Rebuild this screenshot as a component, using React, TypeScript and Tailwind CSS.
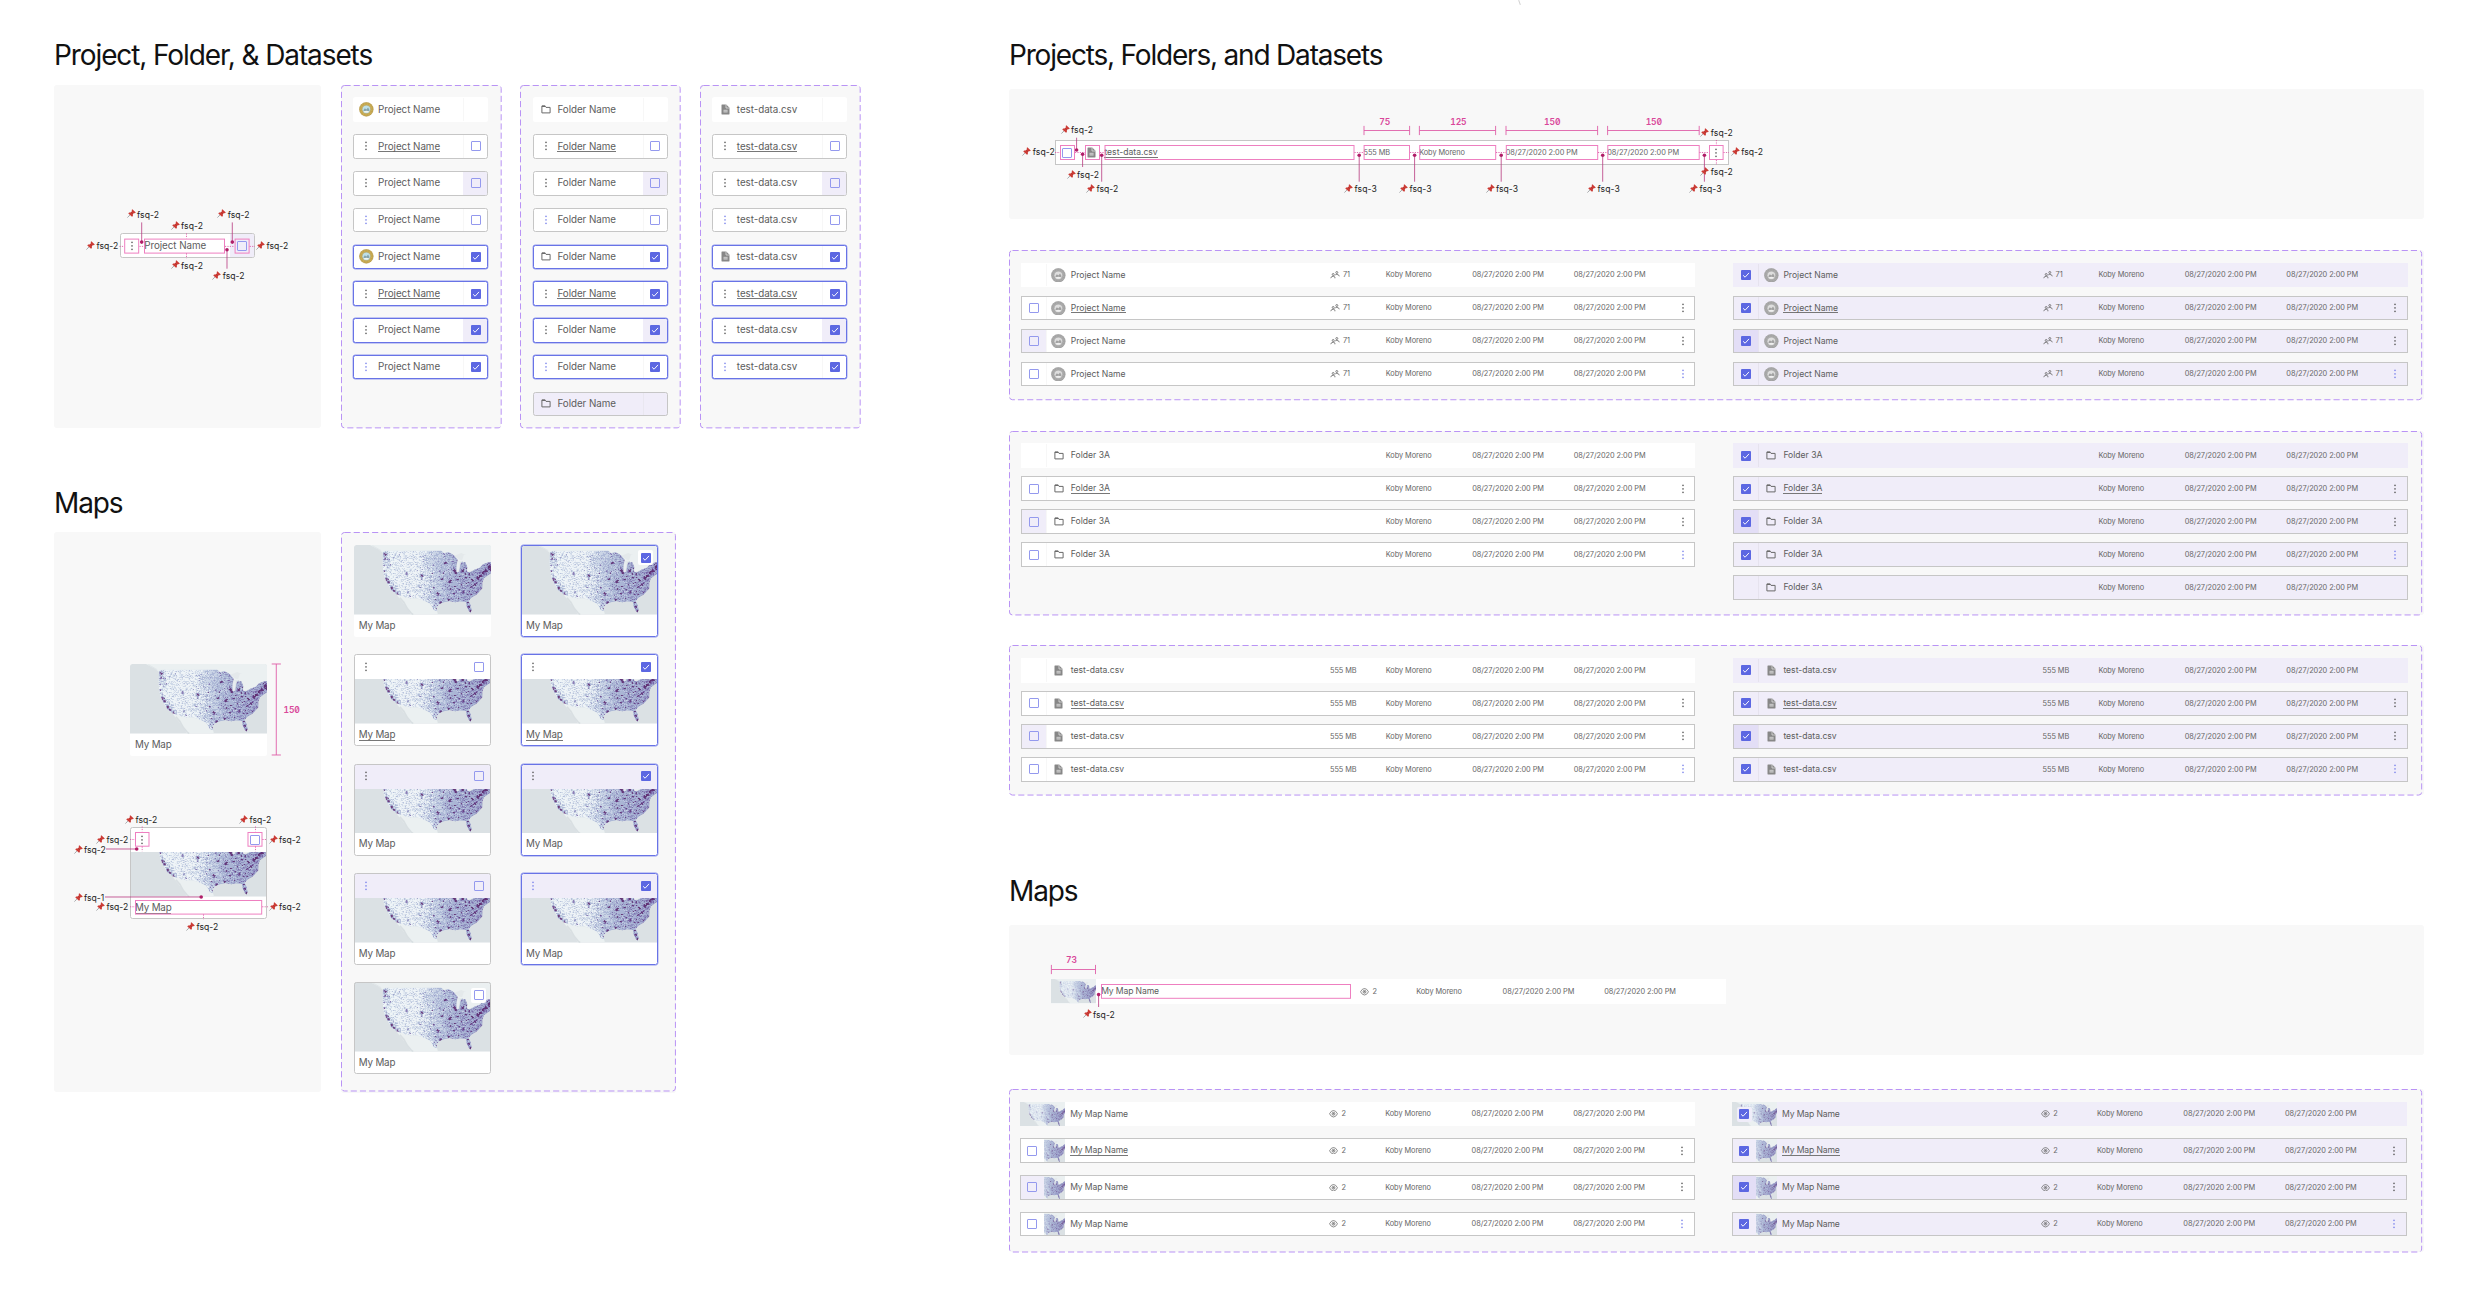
import React from "react";

/* ---------- population map ---------- */

const US =
  "M87 18L100 17L262 17L270 25L285 22L300 31L311 44L308 60L308 78L316 82L319 60L324 50L334 52L340 66L339 80L350 82L362 74L378 68L388 58L400 53L413 51L413 84L400 92L390 100L385 113L385 130L370 147L352 158L344 168L350 180L353 195L350 203L344 196L338 182L336 170L318 169L304 172L288 168L270 172L256 178L248 187L250 199L240 195L232 180L222 172L208 166L190 160L165 160L150 155L128 148L112 136L102 118L92 98L88 78L86 50Z";

function seeded(seed: number) {
  let s = seed;
  return () => {
    s = (s * 1664525 + 1013904223) % 4294967296;
    return s / 4294967296;
  };
}

/* Population centres: x, y, radius. */
const CITIES: [number, number, number][] = [
  [94, 28, 7], [94, 42, 4], [92, 78, 5], [97, 104, 8], [104, 112, 6], [113, 130, 8], [121, 138, 6], [130, 148, 7],
  [100, 66, 3], [110, 60, 3], [158, 86, 6], [160, 92, 4], [204, 92, 7], [203, 102, 4], [162, 142, 5], [168, 154, 4],
  [200, 128, 4], [136, 30, 3], [120, 38, 3], [150, 52, 3], [274, 54, 6], [264, 102, 6], [302, 78, 7], [306, 84, 5],
  [288, 110, 6], [252, 148, 7], [260, 172, 7], [246, 164, 4], [284, 165, 4], [292, 106, 3], [326, 78, 6], [334, 86, 4],
  [346, 88, 4], [336, 98, 3], [318, 94, 3], [310, 104, 3], [328, 142, 7], [322, 118, 4], [316, 134, 4], [352, 126, 4],
  [364, 118, 4], [372, 100, 6], [380, 92, 6], [388, 84, 6], [396, 78, 6], [406, 66, 7], [410, 74, 5], [352, 148, 3],
  [342, 172, 3], [344, 186, 5], [350, 198, 6], [258, 78, 3], [268, 84, 3], [240, 128, 4], [230, 140, 3], [290, 132, 4],
  [300, 146, 3], [304, 124, 3], [238, 60, 3], [236, 84, 3], [356, 106, 4], [344, 112, 3], [248, 190, 3],
];

const SHADES = ["#f1f6f8", "#cbd5e6", "#a9b4d4", "#8c8bbd", "#7158a0", "#561f66"];

function buildCells(): string[] {
  const rnd = seeded(42);
  const out = SHADES.map(() => "");
  for (let y = 15; y < 207; y += 3) {
    for (let x = 84; x < 413; x += 3) {
      const east = Math.min(1, Math.max(0, (x - 180) / 110));
      let v = 0.04 + east * 0.34 + Math.max(0, (x - 300) / 113) * 0.14;
      v += (rnd() - 0.5) * 0.36;
      if (rnd() < 0.11) v += 0.24;
      if (x < 106 && y < 62) v += 0.22;
      if (x < 140 && Math.abs(y - (x * 1.25 - 22)) < 14 && y > 84) v += 0.2;
      for (const [cx, cy, r] of CITIES) {
        const d = Math.hypot(x + 1.5 - cx, y + 1.5 - cy);
        if (d < r) v += 0.95 * (1 - d / r) * (0.6 + rnd() * 0.7);
      }
      const i = v < 0.08 ? 0 : v < 0.28 ? 1 : v < 0.48 ? 2 : v < 0.62 ? 3 : v < 0.78 ? 4 : 5;
      if (i === 1 && rnd() < 0.4) continue;
      out[i] += `M${x} ${y}h3v3h-3z`;
    }
  }
  return out;
}

const CELLS = buildCells();

function MapDefs() {
  return (
    <svg className="absolute h-0 w-0" aria-hidden>
      <defs>
        <linearGradient id="usFill" x1="0" x2="1" y1="0" y2="0">
          <stop offset="0" stopColor="#e6eef3" />
          <stop offset="0.32" stopColor="#e2eaf2" />
          <stop offset="0.6" stopColor="#b9c5de" />
          <stop offset="0.8" stopColor="#a6afd3" />
          <stop offset="1" stopColor="#9793c3" />
        </linearGradient>
        <clipPath id="usClip">
          <path d={US} />
        </clipPath>
        <symbol id="usMap" viewBox="0 0 413 209" preserveAspectRatio="xMidYMid slice">
          <rect width="413" height="209" fill="#dbe1e4" />
          <path d="M48 0L75 14L88 24L413 60V0Z" fill="#ebf0f1" />
          <path d="M56 2L82 17" stroke="#dbe1e4" strokeWidth="2" />
          <path d="M300 33L322 24L345 34L340 48L318 44Z" fill="#e4e9eb" />
          <path d="M340 82L362 74L378 68L388 58L413 49V30L330 30L324 48L334 52L341 66Z" fill="#ebf0f1" />
          <path d="M126 146L165 158L210 164L236 182L250 199L252 209H172L160 190L146 172Z" fill="#ebf0f1" />
          <path d="M138 158L150 172L160 190L172 204L178 209" stroke="#d9dfe2" strokeWidth="5" fill="none" />
          <path d={US} fill="url(#usFill)" />
          <g clipPath="url(#usClip)" opacity="0.85">
            {CELLS.map((d, i) => (
              <path key={i} d={d} fill={SHADES[i]} />
            ))}
          </g>
          <path d="M308 80L309 58L314 48L318 52L316 70L313 82Z" fill="#e8edf0" />
        </symbol>
      </defs>
    </svg>
  );
}

function MapImage({ className }: { className: string }) {
  return (
    <svg className={className}>
      <use href="#usMap" width="100%" height="100%" />
    </svg>
  );
}

/* ---------- small icons ---------- */

function Check({ checked }: { checked?: boolean }) {
  if (!checked) return <span className="block size-[10px] rounded-[1px] border border-[#9499ee]" />;
  return (
    <span className="flex size-[10px] items-center justify-center rounded-[1px] bg-[#5c67e2]">
      <svg viewBox="0 0 10 10" className="size-[10px]" fill="none" stroke="#fff" strokeWidth="0.95">
        <path d="M2.1 5.3L4.1 7.2L8 2.9" />
      </svg>
    </span>
  );
}

function Dots({ active }: { active?: boolean }) {
  return (
    <svg viewBox="0 0 4 10" className="h-[10px] w-[4px]" fill={active ? "#6f79ea" : "#4a4a4a"}>
      <rect x="1.35" y="0.7" width="1.3" height="1.4" />
      <rect x="1.35" y="4.2" width="1.3" height="1.4" />
      <rect x="1.35" y="7.7" width="1.3" height="1.4" />
    </svg>
  );
}

function FolderIcon() {
  return (
    <svg viewBox="0 0 10 9" className="h-[9px] w-[10px]" fill="none" stroke="#6a6a6a" strokeWidth="1">
      <path d="M0.9 7.9V1.1H4.1L5 2.4H9.1V7.9Z" />
      <path d="M0.9 1.3H4.2" strokeWidth="1.4" />
    </svg>
  );
}

function FileIcon() {
  return (
    <svg viewBox="0 0 9 11" className="h-[11px] w-[9px]">
      <path d="M0.5 0.9Q0.5 0.5 0.9 0.5H5.2L8.5 3.8V10.1Q8.5 10.5 8.1 10.5H0.9Q0.5 10.5 0.5 10.1Z" fill="#878787" />
      <path d="M5 0.5V4H8.5" stroke="#e8e8e8" strokeWidth="0.7" fill="none" />
      <path d="M2.5 5.8H6.6V8.6H2.5Z" fill="#c9c9c9" />
      <path d="M2.5 7.2H6.6" stroke="#999" strokeWidth="0.4" />
    </svg>
  );
}

function Seal({ gray }: { gray?: boolean }) {
  const ring = gray ? "#adadad" : "#cdb057";
  const edge = gray ? "#8c8c8c" : "#9d813c";
  const sky = gray ? "#dedede" : "#bfe0e6";
  const land = gray ? "#808080" : "#67848c";
  return (
    <svg viewBox="0 0 30 30" className="size-[14.7px]">
      <circle cx="15" cy="15" r="14.4" fill={ring} />
      <circle cx="15" cy="15" r="14" fill="none" stroke={edge} strokeWidth="1" opacity="0.7" />
      <circle cx="15" cy="15" r="11.4" fill="none" stroke={edge} strokeWidth="1.8" strokeDasharray="1.6 1.9" opacity="0.5" />
      <circle cx="15" cy="15" r="8.6" fill={sky} stroke={edge} strokeWidth="0.7" />
      <path d="M9 17L12 13L15 15.5L18.5 11L21.5 16.5L20.5 19H10Z" fill={land} opacity="0.65" />
      <path d="M9.5 19Q15 16.5 20.5 19L18.5 21.6H11.5Z" fill={gray ? "#efefef" : "#f1f5ee"} />
    </svg>
  );
}

function PeopleIcon() {
  return (
    <svg viewBox="0 0 20 16" className="h-[8px] w-[10px]" fill="none" stroke="#5f5f5f" strokeWidth="1.5">
      <circle cx="6.4" cy="7" r="2" />
      <path d="M1.5 14.4Q2 10.6 6.4 10.6Q8.6 10.6 9.8 12V14.6" />
      <circle cx="13.6" cy="3" r="2" />
      <path d="M9.5 9Q10.5 6.8 13.6 6.8Q18 6.8 18.6 10.6" />
    </svg>
  );
}

function EyeIcon() {
  return (
    <svg viewBox="0 0 18 15" className="h-[7.5px] w-[9px]" fill="none" stroke="#5f5f5f" strokeWidth="1.4">
      <path d="M1 7.5Q4.4 1 9 1T17 7.5Q13.6 14 9 14T1 7.5Z" />
      <circle cx="9" cy="7.5" r="2.9" />
      <circle cx="9" cy="7.5" r="0.8" fill="#5f5f5f" />
    </svg>
  );
}

function PinIcon() {
  return (
    <svg viewBox="0 0 18 18" className="h-[9px] w-[9px]">
      <path d="M0.8 17.2L7.4 10.4" stroke="#8c9094" strokeWidth="1.5" />
      <path d="M10.6 0.4L17.6 6.8L15.6 8.4L13.8 8.2L11.6 11L11.9 14L10 15.6L2.6 8.8L4.2 7L7 7.2L9.9 4.6L9.4 2.2Z" fill="#cc3b35" />
      <path d="M9 7.4L11.6 9.8" stroke="#96302c" strokeWidth="1.3" />
    </svg>
  );
}

/* ---------- annotations ---------- */

type Pt = [number, number];

function Pins({ origin, items }: { origin: Pt; items: [number, number, string?][] }) {
  return (
    <>
      {items.map(([x, y, label], i) => (
        <span
          key={i}
          className="absolute flex h-3 -translate-y-1/2 items-center whitespace-nowrap text-[8.58px] leading-none tracking-[0.05px] text-[#222]"
          style={{ left: x - origin[0], top: y - origin[1] + 0.4 }}
        >
          <span className="w-[10.4px] -translate-y-[1px]">
            <PinIcon />
          </span>
          {label ?? "fsq-2"}
        </span>
      ))}
    </>
  );
}

function Measures({ origin, items }: { origin: Pt; items: [number, number, string][] }) {
  return (
    <>
      {items.map(([x, y, label], i) => (
        <span
          key={i}
          className="absolute -translate-x-1/2 -translate-y-1/2 text-[8.6px] leading-none font-semibold tracking-[-0.15px] text-[#d9479a] [font-feature-settings:'zero','tnum']"
          style={{ left: x - origin[0], top: y - origin[1] + 0.3 }}
        >
          {label}
        </span>
      ))}
    </>
  );
}

/* Boxes are [x, y, width, height]; leaders are [x1, y1, x2, y2] with the dot at the second point. */
function Marks({
  view,
  boxes = [],
  dotted = [],
  leaders = [],
  rulers = [],
}: {
  view: string;
  boxes?: number[][];
  dotted?: number[][];
  leaders?: number[][];
  rulers?: number[][];
}) {
  return (
    <svg viewBox={view} preserveAspectRatio="xMinYMin meet" className="absolute inset-0 h-full w-full">
      {boxes.map(([x, y, w, h], i) => (
        <rect key={`b${i}`} x={x + 0.5} y={y + 0.5} width={w - 1} height={h - 1} fill="none" stroke="#ee7fc0" strokeWidth="1" />
      ))}
      {dotted.map(([x1, y1, x2, y2], i) => (
        <line key={`d${i}`} x1={x1} y1={y1} x2={x2} y2={y2} stroke="#d94b9f" strokeWidth="0.8" strokeDasharray="1.2 1.2" />
      ))}
      {leaders.map(([x1, y1, x2, y2], i) => (
        <g key={`l${i}`}>
          <line x1={x1} y1={y1} x2={x2} y2={y2} stroke="#b8387f" strokeWidth="0.8" />
          <circle cx={x2} cy={y2} r="1.8" fill="#b01e68" />
        </g>
      ))}
      {rulers.map(([x1, y1, x2, y2], i) => {
        const horizontal = y1 === y2;
        const t = 4.6;
        return (
          <g key={`r${i}`} stroke="#df5fa8" strokeWidth="0.9">
            <line x1={x1} y1={y1} x2={x2} y2={y2} />
            <line x1={horizontal ? x1 : x1 - t} x2={horizontal ? x1 : x1 + t} y1={horizontal ? y1 - t : y1} y2={horizontal ? y1 + t : y1} />
            <line x1={horizontal ? x2 : x2 - t} x2={horizontal ? x2 : x2 + t} y1={horizontal ? y2 - t : y2} y2={horizontal ? y2 + t : y2} />
          </g>
        );
      })}
    </svg>
  );
}

/* ---------- panels ---------- */

function Heading({ children, className }: { children: React.ReactNode; className: string }) {
  return <h2 className={`flex items-center text-[28px] leading-none whitespace-nowrap text-[#111] ${className}`}>{children}</h2>;
}

function DashedPanel({ className, children }: { className: string; children: React.ReactNode }) {
  return (
    <div className={`relative rounded-[3px] bg-[#f8f8f8] ${className}`}>
      <svg className="pointer-events-none absolute inset-0 h-full w-full overflow-visible">
        <rect x="0.5" y="0.5" width="99.8%" height="99.7%" rx="3" fill="none" stroke="#b993f5" strokeWidth="1" strokeDasharray="6.13 3.07" />
      </svg>
      {children}
    </div>
  );
}

/* ---------- grid cards ---------- */

type CardState = {
  lead: "icon" | "dots" | "active";
  box?: "empty" | "checked";
  link?: boolean;
  hot?: boolean;
  selected?: boolean;
  plain?: boolean;
  target?: boolean;
};

const CARD_STATES: CardState[] = [
  { lead: "icon", plain: true },
  { lead: "dots", box: "empty", link: true },
  { lead: "dots", box: "empty", hot: true },
  { lead: "active", box: "empty" },
  { lead: "icon", box: "checked", selected: true },
  { lead: "dots", box: "checked", link: true, selected: true },
  { lead: "dots", box: "checked", hot: true, selected: true },
  { lead: "active", box: "checked", selected: true },
];

function Card({ s, icon, name }: { s: CardState; icon: React.ReactNode; name: string }) {
  const border = s.plain
    ? "border-transparent"
    : s.selected
      ? "border-[#6873e6] shadow-[0_0_0_0.4px_#8f97ee]"
      : "border-[#c6c6c6]";
  return (
    <div className={`flex h-[24.6px] w-[135px] items-stretch overflow-hidden rounded-[2.5px] border ${border} ${s.target ? "bg-[#f0edf9]" : "bg-white"}`}>
      <span className="flex w-[23.7px] items-center justify-center">{s.lead === "icon" ? icon : <Dots active={s.lead === "active"} />}</span>
      <span className="flex flex-1 items-center text-[9.8px] leading-none tracking-[-0.04px] whitespace-nowrap text-[#5c5c5c]">
        <span className={s.link ? "border-b border-[#777] pt-[1px]" : ""}>{name}</span>
      </span>
      <span className={`flex w-[24px] items-center justify-center border-l ${s.hot ? "border-[#f0edf9] bg-[#f0edf9]" : s.target ? "border-[#e9e7f0]" : "border-[#f7f7f7]"}`}>
        {s.box && <Check checked={s.box === "checked"} />}
      </span>
    </div>
  );
}

function CardColumn({ icon, name, extra }: { icon: React.ReactNode; name: string; extra?: boolean }) {
  return (
    <DashedPanel className="flex h-[343.4px] w-[160px] flex-col gap-[12.2px] pt-[12.8px] pl-[12.4px]">
      {CARD_STATES.map((s, i) => (
        <Card key={i} s={s} icon={icon} name={name} />
      ))}
      {extra && <Card s={{ lead: "icon", target: true }} icon={icon} name={name} />}
    </DashedPanel>
  );
}

/* ---------- map cards ---------- */

type MapState = {
  border: "none" | "gray" | "blue";
  header?: "white" | "tint";
  active?: boolean;
  link?: boolean;
  box?: "empty" | "checked";
};

const MAP_ROWS: MapState[][] = [
  [{ border: "none" }, { border: "blue", box: "checked" }],
  [{ border: "gray", header: "white", link: true, box: "empty" }, { border: "blue", header: "white", link: true, box: "checked" }],
  [{ border: "gray", header: "tint", box: "empty" }, { border: "blue", header: "tint", box: "checked" }],
  [{ border: "gray", header: "tint", active: true, box: "empty" }, { border: "blue", header: "tint", active: true, box: "checked" }],
  [{ border: "gray", box: "empty" }],
];

function MapCard({ s }: { s: MapState }) {
  const ring =
    s.border === "none"
      ? ""
      : s.border === "blue"
        ? "border border-[#6873e6] shadow-[0_0_0_0.4px_#8f97ee]"
        : "border border-[#c6c6c6]";
  return (
    <div className="relative h-[91.9px] w-[137.4px] rounded-[2.5px] bg-white">
      <MapImage className="block h-[69.7px] w-full rounded-t-[2.5px]" />
      <div className="flex h-[22px] items-center pl-[5.2px] text-[9.8px] leading-none tracking-[-0.17px] text-[#5c5c5c]">
        <span className={s.link ? "border-b border-[#777] pt-[1px]" : ""}>My Map</span>
      </div>
      {s.header ? (
        <div className={`absolute inset-x-0 top-0 flex h-[25px] items-center justify-between rounded-t-[2.5px] pr-[7.4px] pl-[10.3px] ${s.header === "tint" ? "bg-[#f0edf9]" : "bg-white"}`}>
          <Dots active={s.active} />
          <Check checked={s.box === "checked"} />
        </div>
      ) : (
        s.box && (
          <div className="absolute top-[5.2px] right-[4.8px] flex size-[15px] items-center justify-center rounded-[2px] bg-white">
            <Check checked={s.box === "checked"} />
          </div>
        )
      )}
      <div className={`absolute inset-0 rounded-[2.5px] ${ring}`} />
    </div>
  );
}

/* ---------- list rows ---------- */

type RowState = {
  plain?: boolean;
  link?: boolean;
  hot?: boolean;
  active?: boolean;
  box?: "empty" | "checked";
  dots?: boolean;
  selected?: boolean;
};

const LEFT_ROWS: RowState[] = [
  { plain: true },
  { box: "empty", link: true, dots: true },
  { box: "empty", hot: true, dots: true },
  { box: "empty", dots: true, active: true },
];

const RIGHT_ROWS: RowState[] = [
  { plain: true, box: "checked", selected: true },
  { box: "checked", link: true, dots: true, selected: true },
  { box: "checked", hot: true, dots: true, selected: true },
  { box: "checked", dots: true, active: true, selected: true },
];

type Kind = "project" | "folder" | "file" | "map";

const NAMES: Record<Kind, string> = { project: "Project Name", folder: "Folder 3A", file: "test-data.csv", map: "My Map Name" };

function Lead({ kind, s }: { kind: Kind; s: RowState }) {
  const tone = s.hot ? (s.selected ? "bg-[#e3def6]" : "bg-[#f0edf9]") : s.selected ? "bg-[#f0edf9]" : "bg-white";
  if (kind === "map") {
    return (
      <span className="relative -my-px -ml-px flex w-[45px] shrink-0 items-stretch">
        <MapImage className="block h-full w-full" />
        {s.plain ? (
          s.box && (
            <span className="absolute top-[5px] left-[5px] flex size-[15px] items-center justify-center rounded-[2px] bg-[#f0edf9]">
              <Check checked />
            </span>
          )
        ) : (
          <span className={`absolute inset-y-0 left-0 flex w-[24.3px] items-center justify-center ${tone}`}>
            <Check checked={s.box === "checked"} />
          </span>
        )}
      </span>
    );
  }
  const edge = s.selected ? "border-[#e6e3ee]" : "border-[#f7f7f7]";
  return (
    <span className="flex w-[49px] shrink-0">
      <span className={`flex w-[25px] shrink-0 items-center justify-center border-r ${edge} ${tone}`}>
        {s.box && <Check checked={s.box === "checked"} />}
      </span>
      <span className="flex w-[24px] shrink-0 items-center justify-center">
        {kind === "project" ? <Seal gray /> : kind === "folder" ? <FolderIcon /> : <FileIcon />}
      </span>
    </span>
  );
}

function Row({ kind, s }: { kind: Kind; s: RowState }) {
  const overlay = s.plain ? "" : "border border-[#c6c6c6]";
  return (
    <div className={`relative flex h-[24.6px] w-[674.6px] items-stretch ${s.selected ? "bg-[#f0edf9]" : "bg-white"}`}>
      <div className="flex w-[50px] shrink-0 py-px pl-px">
        <Lead kind={kind} s={s} />
      </div>
      <span className="flex w-[259.2px] items-center text-[8.58px] leading-none whitespace-nowrap text-[#5c5c5c]">
        <span className={`${s.link ? "border-b border-[#777] pt-[1px]" : ""} ${kind === "map" ? "tracking-[-0.12px]" : ""}`}>{NAMES[kind]}</span>
      </span>
      <div className="flex items-center text-[7.36px] leading-none tracking-[-0.06px] whitespace-nowrap text-[#666]">
        <span className="flex w-[55.8px] items-center">
          {kind === "project" && (
            <>
              <PeopleIcon />
              <span className="ml-[3px]">71</span>
            </>
          )}
          {kind === "file" && "555 MB"}
          {kind === "map" && (
            <>
              <EyeIcon />
              <span className="ml-[3.2px]">2</span>
            </>
          )}
        </span>
        <span className="w-[86.4px]">Koby Moreno</span>
        <span className="w-[101.6px]">08/27/2020 2:00 PM</span>
        <span className="w-[107px]">08/27/2020 2:00 PM</span>
      </div>
      {s.dots && (
        <span className="flex items-center">
          <Dots active={s.active} />
        </span>
      )}
      <div className={`absolute inset-0 ${overlay}`} />
    </div>
  );
}

function RowGroup({ kind, className, stack }: { kind: Kind; className: string; stack: string }) {
  return (
    <DashedPanel className={`flex w-[1415px] ${className}`}>
      <div className={`flex flex-col ${stack}`}>
        {LEFT_ROWS.map((s, i) => (
          <Row key={i} kind={kind} s={s} />
        ))}
      </div>
      <div className={`flex flex-col ${kind === "map" ? "ml-[37.2px]" : "ml-[38px]"} ${stack}`}>
        {RIGHT_ROWS.map((s, i) => (
          <Row key={i} kind={kind} s={s} />
        ))}
        {kind === "folder" && <Row kind="folder" s={{ selected: true }} />}
      </div>
    </DashedPanel>
  );
}

/* Dataset row used in the spacing specification, where columns are inset by the outer padding. */
function SpecRow() {
  return (
    <div className="relative flex h-[24.4px] w-[673.5px] items-center border border-[#c6c6c6] bg-white text-[7.36px] leading-none tracking-[-0.06px] whitespace-nowrap text-[#666]">
      <span className="ml-[6.2px]">
        <Check />
      </span>
      <span className="ml-[15px] w-[17px]">
        <FileIcon />
      </span>
      <span className="w-[259.1px] text-[8.58px] tracking-normal text-[#5c5c5c]">
        <span className="border-b border-[#777] pt-[1px]">test-data.csv</span>
      </span>
      <span className="w-[55.7px]">555 MB</span>
      <span className="w-[86.6px]">Koby Moreno</span>
      <span className="w-[101.5px]">08/27/2020 2:00 PM</span>
      <span className="w-[107.1px]">08/27/2020 2:00 PM</span>
      <Dots />
    </div>
  );
}

/* ---------- page ---------- */

export default function App() {
  return (
    <div className="relative flex h-[1294px] w-[2470px] overflow-hidden bg-white pl-[54px] font-['Inter',sans-serif]">
      <MapDefs />
      <span className="absolute top-0 left-[1519px] h-[5px] w-px rotate-[-20deg] bg-[#d0d0d0]" />

      <div className="flex w-[955px] flex-col pt-[25px]">
        <Heading className="h-[59.6px] tracking-[-1.1px]">Project, Folder, &amp; Datasets</Heading>
        <div className="flex">
          <div className="relative mr-[20px] flex h-[343.4px] w-[267px] items-start rounded-[3px] bg-[#f8f8f8] pt-[148.7px] pl-[65.5px]">
            <Card s={{ lead: "dots", box: "empty", hot: true }} icon={null} name="Project Name" />
            <Marks
              view="54 84.6 267 343.4"
              boxes={[[124.2, 238.2, 15, 15], [144, 238.2, 81, 15], [234.6, 238.2, 15, 15]]}
              dotted={[
                [119.5, 246, 124, 246], [139.5, 246, 144, 246], [225, 246, 234.6, 246], [249.7, 246, 255, 246],
                [186.5, 233, 186.5, 238], [186.5, 253, 186.5, 258],
              ]}
              leaders={[[141.7, 222, 141.7, 241.7], [232.3, 222, 232.3, 241.7], [227, 268.3, 227, 249.3]]}
            />
            <Pins
              origin={[54, 84.3]}
              items={[[126.7, 214.3], [170.7, 226], [217.3, 214.3], [86, 246], [256, 246], [170.7, 265.3], [212.3, 276]]}
            />
          </div>
          <div className="flex gap-[19.4px]">
            <CardColumn icon={<Seal />} name="Project Name" />
            <CardColumn icon={<FolderIcon />} name="Folder Name" extra />
            <CardColumn icon={<FileIcon />} name="test-data.csv" />
          </div>
        </div>

        <Heading className="mt-[45.1px] h-[59.4px] tracking-[-1.1px]">Maps</Heading>
        <div className="flex gap-[20px]">
          <div className="relative flex h-[559.7px] w-[267px] flex-col items-start gap-[71.4px] rounded-[3px] bg-[#f8f8f8] pt-[131.7px] pl-[75.8px]">
            <MapCard s={{ border: "none" }} />
            <MapCard s={{ border: "gray", header: "white", link: true, box: "empty" }} />
            <Marks
              view="54 532.5 267 559.7"
              boxes={[[135, 832.5, 14.5, 14.7], [247.5, 832.5, 15, 14.7], [135, 900.5, 127.2, 14.6]]}
              dotted={[
                [130, 840, 135, 840], [262.4, 840, 267, 840], [130, 907.3, 135, 907.3], [262.2, 907.3, 268, 907.3],
                [142.2, 827, 142.2, 832], [142.2, 847, 142.2, 852], [255.5, 827, 255.5, 832], [255.5, 847, 255.5, 852],
                [203.5, 915, 203.5, 920],
              ]}
              leaders={[[106, 849.5, 136.7, 849.5], [105, 897.5, 201.2, 897.5]]}
              rulers={[[276.3, 664.5, 276.3, 755.5]]}
            />
            <Pins
              origin={[54, 532.3]}
              items={[
                [125, 820], [239, 820], [96, 839.7], [268.5, 839.7], [73.5, 849.7], [73.5, 897.5, "fsq-1"], [96, 907], [268.5, 907], [186, 926.7],
              ]}
            />
            <Measures origin={[54, 532.3]} items={[[291.6, 710, "150"]]} />
          </div>
          <DashedPanel className="h-[560.2px] w-[334.6px] pt-[12.4px] pl-[12.6px]">
            <div className="grid grid-cols-[137.4px_137.4px] gap-x-[29.9px] gap-y-[17.5px]">
              {MAP_ROWS.flat().map((s, i) => (
                <MapCard key={i} s={s} />
              ))}
            </div>
          </DashedPanel>
        </div>
      </div>

      <div className="flex flex-col pt-[20.4px]">
        <Heading className="h-[68.7px] tracking-[-1.19px]">Projects, Folders, and Datasets</Heading>
        <div className="relative flex h-[130px] w-[1415px] items-start rounded-[3px] bg-[#f8f8f8] pt-[51.3px] pl-[46.2px]">
          <SpecRow />
          <Marks
            view="1009 89 1415 130"
            boxes={[
              [1060, 145, 15, 15], [1085, 145, 15, 15], [1104.5, 145, 250, 15], [1363.6, 145, 46.4, 15], [1419.2, 145, 77, 15],
              [1505.8, 145, 92.4, 15], [1607.3, 145, 92.4, 15], [1709, 145, 14.6, 15],
            ]}
            dotted={[
              [1055, 152.5, 1060, 152.5], [1075, 152.5, 1085, 152.5], [1100, 152.5, 1104.5, 152.5], [1354.5, 152.5, 1363.6, 152.5],
              [1410, 152.5, 1419, 152.5], [1496, 152.5, 1506, 152.5], [1598, 152.5, 1607.5, 152.5], [1699.5, 152.5, 1709, 152.5],
              [1723.5, 152.5, 1729, 152.5], [1716.4, 140, 1716.4, 145], [1716.4, 160, 1716.4, 165],
            ]}
            leaders={[
              [1076.6, 137.7, 1076.6, 150], [1082.6, 167, 1082.6, 154.3], [1101.7, 181.7, 1101.7, 155.3], [1359.2, 181.7, 1359.2, 155.3],
              [1414.6, 181.7, 1414.6, 155.3], [1501.2, 181.7, 1501.2, 155.3], [1602.7, 181.7, 1602.7, 155.3], [1704.4, 181.7, 1704.4, 155.3],
            ]}
            rulers={[
              [1364, 130.5, 1409.6, 130.5], [1419.4, 130.5, 1495.6, 130.5], [1506, 130.5, 1597.6, 130.5], [1607.6, 130.5, 1699.2, 130.5],
            ]}
          />
          <Pins
            origin={[1009, 89]}
            items={[
              [1060.7, 130], [1022.4, 152.2], [1066.7, 174.7], [1086, 189.3], [1344.2, 189.3, "fsq-3"], [1399, 189.3, "fsq-3"],
              [1485.5, 189.3, "fsq-3"], [1587.2, 189.3, "fsq-3"], [1689, 189.3, "fsq-3"], [1700.4, 133], [1700.4, 172.3], [1730.8, 152.3],
            ]}
          />
          <Measures origin={[1009, 89]} items={[[1384.7, 121.3, "75"], [1458.4, 121.3, "125"], [1552.2, 121.3, "150"], [1653.8, 121.3, "150"]]} />
        </div>

        <RowGroup kind="project" className="mt-[31px] h-[149.7px] pl-[11.8px]" stack="gap-[8.45px] pt-[12.6px]" />
        <RowGroup kind="folder" className="mt-[30.8px] h-[184px] pl-[11.8px]" stack="gap-[8.45px] pt-[12.8px]" />
        <RowGroup kind="file" className="mt-[30.8px] h-[150px] pl-[11.8px]" stack="gap-[8.45px] pt-[12.6px]" />

        <Heading className="mt-[61.5px] h-[68px] tracking-[-1.1px]">Maps</Heading>
        <div className="relative flex h-[130px] w-[1415px] items-start rounded-[3px] bg-[#f8f8f8] pt-[54.6px] pl-[42.2px]">
          <Row kind="map" s={{ plain: true }} />
          <Marks
            view="1009 925 1415 130"
            boxes={[[1101, 984, 250, 14.8]]}
            leaders={[[1098.6, 1007, 1098.6, 994.6]]}
            rulers={[[1051.4, 969.5, 1095.5, 969.5]]}
          />
          <Pins origin={[1009, 925]} items={[[1082.6, 1014.7]]} />
          <Measures origin={[1009, 925]} items={[[1071.4, 960, "73"]]} />
        </div>
        <RowGroup kind="map" className="mt-[34.3px] h-[163px] pl-[11.2px]" stack="gap-[12.1px] pt-[12.6px]" />
      </div>
    </div>
  );
}
